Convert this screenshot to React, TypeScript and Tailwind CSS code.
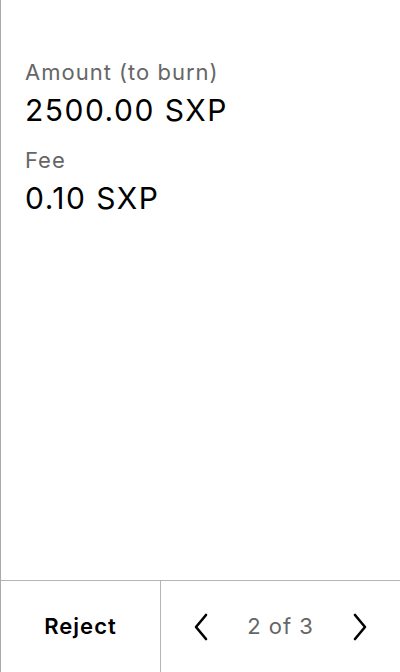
import React from 'react';

const rows = [
  { label: 'Amount (to burn)', value: '2500.00 SXP' },
  { label: 'Fee', value: '0.10 SXP' },
];

function Chevron({ dir }: { dir: 'left' | 'right' }) {
  return (
    <svg width="16" height="28" viewBox="0 0 16 28" fill="none">
      <path
        d={dir === 'left' ? 'M13 2 L3 14 L13 26' : 'M3 2 L13 14 L3 26'}
        stroke="#000"
        strokeWidth="2.6"
        strokeLinecap="round"
        strokeLinejoin="round"
      />
    </svg>
  );
}

export default function App() {
  return (
    <div
      className="w-[400px] h-[672px] flex flex-col bg-white border-l border-[#aaaaaa]"
      style={{ fontFamily: 'Inter, "Noto Sans", sans-serif' }}
    >
      <div className="flex-1 px-6 pt-[58px] flex flex-col gap-[18px]">
        {rows.map((row, i) => (
          <div key={i} className="flex flex-col gap-[6px]">
            <div className="text-[22px] leading-[28px] tracking-[1px] text-[#666666]">{row.label}</div>
            <div className="text-[30px] leading-[36px] tracking-[1.5px] text-black">{row.value}</div>
          </div>
        ))}
      </div>

      {/* footer */}
      <div className="h-[92px] flex border-t border-[#b5b5b5]">
        <div className="w-[160px] flex items-center justify-center border-r border-[#b5b5b5]">
          <span className="text-[22px] font-semibold tracking-[1px] text-black">Reject</span>
        </div>
        <div className="flex-1 flex items-center justify-between px-[32px]">
          <Chevron dir="left" />
          <span className="text-[22px] tracking-[1px] text-[#666666]">2 of 3</span>
          <Chevron dir="right" />
        </div>
      </div>
    </div>
  );
}
